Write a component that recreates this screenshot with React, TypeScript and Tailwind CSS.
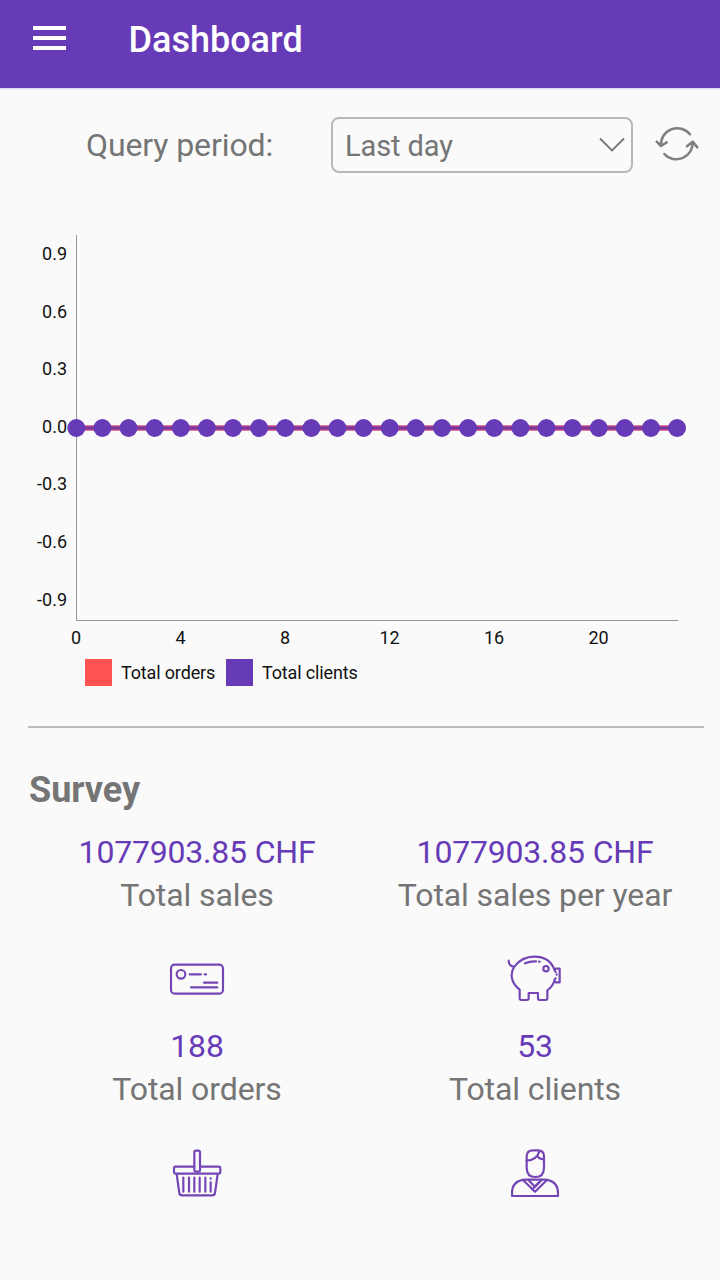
import React from 'react';

const yLabels = ['0.9', '0.6', '0.3', '0.0', '-0.3', '-0.6', '-0.9'];
const xLabels = [0, 4, 8, 12, 16, 20];
const points = Array.from({ length: 24 }, (_, hour) => 76.3 + hour * 26.12);

const CardIcon: React.FC = () => (
  <>
    <rect x="63" y="74" width="156" height="87" rx="11" />
    <circle cx="93" cy="103" r="13" />
    <path d="M119 103h34M164 103h4M162 128h40M123 142h79" />
  </>
);

const PiggyIcon: React.FC = () => (
  <>
    <path d="M71 62c0 9 5 17 17 18M88 80c15-20 36-30 60-30 28 0 50 13 60 38l4-2h12v41h-12l-4-4c-4 12-10 20-21 28v24q0 5-5 5h-18q-5 0-5-5v-16h-28v16q0 5-5 5h-17q-5 0-5-5v-26c-25-20-31-47-16-69z" />
    <path d="M120 70q16-7 33-6M162 65h2" />
    <circle cx="183" cy="86" r="8" />
    <path d="M208 88q0 6 4 8M208 123q0-6 4-8M215 103v1" />
  </>
);

const BasketIcon: React.FC = () => (
  <>
    <path d="M133 110H76q-4 0-4 4v13q0 4 4 4h131q4 0 4-4v-13q0-4-4-4h-57" />
    <rect x="133" y="62" width="17" height="63" rx="5" />
    <path d="M80 132l8 57q1 7 9 7h89q8 0 9-7l8-57" />
    <path d="M100 143v42M117 143v42M133 143v42M149 143v42M166 143v42M182 157v28M182 145v1" />
  </>
);

const PersonIcon: React.FC = () => (
  <>
    <path d="M125 80q0-19 19-19h15q18 0 18 18v34q0 28-26 28t-26-28z" />
    <path d="M125 92q29-1 38-27M157 79q6 8 19 9" />
    <path d="M81 198v-8c0-26 15-40 42-41h54c27 1 42 15 42 41v8z" />
    <path d="M115 151l35 34 35-34M130 150l20 20 20-20" />
    <path d="M142 178l20-21" />
  </>
);

const stats = [
  { value: '1077903.85 CHF', label: 'Total sales', viewBox: '45 21 192 192', Icon: CardIcon },
  { value: '1077903.85 CHF', label: 'Total sales per year', viewBox: '54 21 192 192', Icon: PiggyIcon },
  { value: '188', label: 'Total orders', viewBox: '45 33 192 192', Icon: BasketIcon },
  { value: '53', label: 'Total clients', viewBox: '54 33 192 192', Icon: PersonIcon },
];

const Chart: React.FC = () => (
  <svg className="block h-[430px] w-[720px]" viewBox="0 228 720 430">
    <path d="M76.5 235V620.5H678" fill="none" stroke="#969696" strokeWidth="1" />
    <g fontSize="18" fill="#111111">
      {yLabels.map((label, i) => (
        <text key={label} x="67" y={260 + i * 57.6} textAnchor="end">
          {label}
        </text>
      ))}
      {xLabels.map((label) => (
        <text key={label} x={76 + label * 26.13} y="644" textAnchor="middle">
          {label}
        </text>
      ))}
    </g>
    <path d="M76 428H677" stroke="#d0527f" strokeWidth="5.5" />
    <path d="M76 428H677" stroke="#78359f" strokeWidth="3" />
    {points.map((x) => (
      <circle key={x} cx={x} cy="428" r="9" fill="#673ab7" />
    ))}
  </svg>
);

const App: React.FC = () => {
  return (
    <div className="h-[1280px] w-[720px] overflow-hidden bg-[#fafafa] font-[Roboto,sans-serif] text-[#757575]">
      <header className="flex h-[88px] items-center bg-[#673ab7] pb-2 pl-[33px] text-white shadow-[0_1px_2px_rgba(103,58,183,0.25)]">
        <button className="mt-[-4px] flex w-[33px] flex-col gap-[6px]" aria-label="Menu">
          <span className="h-[4px] w-full bg-white" />
          <span className="h-[4px] w-full bg-white" />
          <span className="h-[4px] w-full bg-white" />
        </button>
        <h1 className="ml-[62.5px] text-[36px] leading-[42px] font-medium">Dashboard</h1>
      </header>

      <div className="flex h-[140px] items-start pt-[29px] pl-[86px]">
        <span className="w-[245px] text-[32px] leading-[56px] tracking-[-0.1px]">Query period:</span>
        <button className="flex h-14 w-[302px] items-center justify-between rounded-lg border-2 border-[#b8b8b8] pr-[6px] pl-3 text-[29px]">
          <span className="pt-[2px] leading-[54px] tracking-[-0.1px]">Last day</span>
          <svg className="h-4 w-[26px]" viewBox="0 0 26 16" fill="none" stroke="#757575" strokeWidth="1.8">
            <path d="M1 1.5l12 12 12-12" />
          </svg>
        </button>
        <button className="mt-[7px] ml-5" aria-label="Refresh">
          <svg className="h-10 w-12" viewBox="0 0 144 120" fill="none" stroke="#808080" strokeWidth="7.5" strokeLinecap="round" strokeLinejoin="round">
            <path d="M111 31A49 49 0 0 0 24 66M11 53l13 13 17-11" />
            <path d="M34 90a49 49 0 0 0 85-37M102 67l17-14 14 17" />
          </svg>
        </button>
      </div>

      <Chart />

      <div className="mt-px flex h-[27px] items-center pl-[85px] text-[18px] tracking-[-0.15px] text-[#111111]">
        <span className="size-[27px] bg-[#ff5252]" />
        <span className="ml-[9px] w-[105px]">Total orders</span>
        <span className="size-[27px] bg-[#673ab7]" />
        <span className="ml-[9px]">Total clients</span>
      </div>

      <section className="mt-10 mr-4 ml-7 border-t-2 border-[#bdbdbd]">
        <h2 className="mt-[41px] pl-px text-[36px] leading-[42px] font-bold">Survey</h2>
        <div className="mt-5 grid grid-cols-2">
          {stats.map(({ value, label, viewBox, Icon }) => (
            <div key={label} className="flex h-[194px] flex-col items-center text-[32px] leading-[43px]">
              <span className="tracking-[-0.2px] text-[#673ab7]">{value}</span>
              <span className="tracking-[-0.1px]">{label}</span>
              <svg className="mt-[30px] size-16" viewBox={viewBox} fill="none" stroke="#7446b5" strokeWidth="6.5" strokeLinecap="round" strokeLinejoin="round">
                <Icon />
              </svg>
            </div>
          ))}
        </div>
      </section>
    </div>
  );
};

export default App;
